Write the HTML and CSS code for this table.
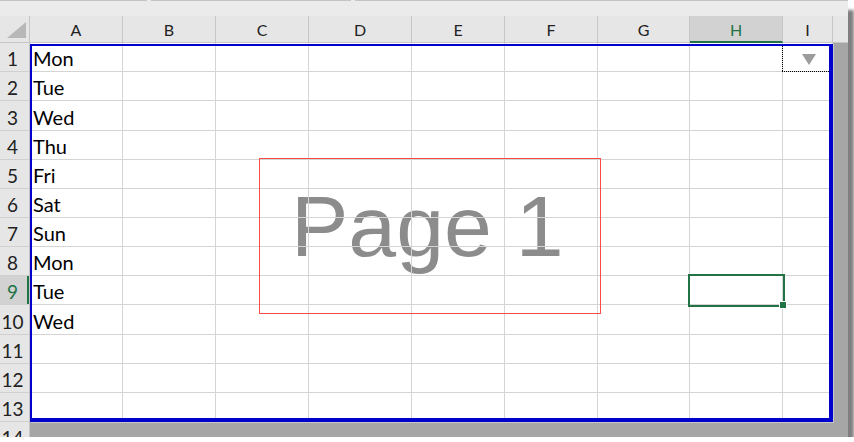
FILE: index.html
```html
<!DOCTYPE html>
<html>
<head>
<meta charset="utf-8">
<link rel="stylesheet" href="styles.css">
</head>
<body>
<div class="window">
  <div class="topbar">
    <span class="seg seg1"></span>
    <span class="seg seg2"></span>
    <span class="seg seg3"></span>
  </div>
  <div class="colheads">
    <div class="corner">
      <svg class="selall" width="19" height="16" viewBox="0 0 19 16"><polygon points="19,0 19,16 0,16" fill="#b8b8b8"/></svg>
    </div>
    <div class="ch w93">A</div>
    <div class="ch w93">B</div>
    <div class="ch w93">C</div>
    <div class="ch w103">D</div>
    <div class="ch w93">E</div>
    <div class="ch w93">F</div>
    <div class="ch w92">G</div>
    <div class="ch w93 sel">H</div>
    <div class="ch w50">I</div>
    <div class="ch rest"></div>
  </div>
  <div class="main">
    <div class="rowheads">
      <div class="rh">1</div>
      <div class="rh">2</div>
      <div class="rh tall">3</div>
      <div class="rh">4</div>
      <div class="rh">5</div>
      <div class="rh">6</div>
      <div class="rh">7</div>
      <div class="rh">8</div>
      <div class="rh sel">9</div>
      <div class="rh tall">10</div>
      <div class="rh">11</div>
      <div class="rh">12</div>
      <div class="rh">13</div>
      <div class="rh last">14</div>
    </div>
    <div class="area">
      <div class="page">
        <div class="wm-text">Page 1</div>
        <div class="cells">
          <div>Mon</div><div></div><div></div><div></div><div></div><div></div><div></div><div></div><div></div>
          <div>Tue</div><div></div><div></div><div></div><div></div><div></div><div></div><div></div><div></div>
          <div>Wed</div><div></div><div></div><div></div><div></div><div></div><div></div><div></div><div></div>
          <div>Thu</div><div></div><div></div><div></div><div></div><div></div><div></div><div></div><div></div>
          <div>Fri</div><div></div><div></div><div></div><div></div><div></div><div></div><div></div><div></div>
          <div>Sat</div><div></div><div></div><div></div><div></div><div></div><div></div><div></div><div></div>
          <div>Sun</div><div></div><div></div><div></div><div></div><div></div><div></div><div></div><div></div>
          <div>Mon</div><div></div><div></div><div></div><div></div><div></div><div></div><div></div><div></div>
          <div>Tue</div><div></div><div></div><div></div><div></div><div></div><div></div><div></div><div></div>
          <div>Wed</div><div></div><div></div><div></div><div></div><div></div><div></div><div></div><div></div>
          <div></div><div></div><div></div><div></div><div></div><div></div><div></div><div></div><div></div>
          <div></div><div></div><div></div><div></div><div></div><div></div><div></div><div></div><div></div>
          <div></div><div></div><div></div><div></div><div></div><div></div><div></div><div></div><div></div>
        </div>
        <div class="wm-box"></div>
        <div class="frame"></div>
        <div class="dots-v"></div>
        <div class="dots-h"></div>
        <svg class="dropdown" width="14" height="12" viewBox="0 0 14 12"><polygon points="0,0 14,0 7,11" fill="#9c9c9c"/></svg>
        <div class="selection"><span class="handle"></span></div>
      </div>
    </div>
  </div>
</div>
</body>
</html>
```

FILE: styles.css
```css
* { box-sizing: border-box; }

html, body {
  margin: 0;
  padding: 0;
  background: #ffffff;
}

.window {
  width: 848px;
  height: 437px;
  overflow: hidden;
  background: #a6a6a6;
  box-shadow: 8px 8px 3px -2px rgba(0, 0, 0, 0.5);
  display: flex;
  flex-direction: column;
  font-family: "Lato", "Open Sans", sans-serif;
}

.topbar {
  height: 16px;
  background: #ebebeb;
  display: flex;
  gap: 4px;
  flex: none;
}

.seg {
  height: 1px;
  background: #c4c4c4;
}
.seg1 { width: 147px; }
.seg2 { width: 200px; }
.seg3 { flex: 1; }

.colheads {
  height: 27px;
  display: flex;
  background: #e6e6e6;
  flex: none;
}

.corner {
  width: 30px;
  border-right: 1px solid #c6c6c6;
  border-bottom: 1px solid #c6c6c6;
  display: flex;
  align-items: flex-end;
  justify-content: flex-end;
  padding: 0 3px 4px 0;
}

.ch {
  border-right: 1px solid #c6c6c6;
  border-bottom: 1px solid #c6c6c6;
  display: flex;
  align-items: center;
  justify-content: center;
  font-size: 16px;
  color: #222;
  padding-top: 1px;
}
.w93 { width: 93px; }
.w92 { width: 92px; }
.w103 { width: 103px; }
.w50 { width: 50px; }
.ch.rest { flex: 1; border-right: none; }

.ch.sel {
  background: #d2d2d2;
  color: #217346;
  border-bottom: 2px solid #217346;
  padding-top: 2px;
}

.main {
  flex: 1;
  display: flex;
  min-height: 0;
}

.rowheads {
  width: 30px;
  flex: none;
  display: flex;
  flex-direction: column;
  background: #e6e6e6;
  border-right: 1px solid #c6c6c6;
}

.rh {
  height: 29px;
  flex: none;
  border-bottom: 1px solid #d0d0d0;
  display: flex;
  align-items: flex-end;
  justify-content: center;
  padding: 0 4px 1px 0;
  font-size: 19px;
  line-height: 23px;
  color: #222;
}
.rh.tall { height: 30px; }
.rh.sel {
  background: #d2d2d2;
  color: #217346;
  box-shadow: inset -2px 0 0 #217346;
}
.rh.last { flex: 1; border-bottom: none; align-items: flex-start; padding-top: 4px; }

.area {
  flex: 1;
  background: #a6a6a6;
}

.page {
  position: relative;
  width: 803px;
  height: 379px;
  background: #ffffff;
  box-shadow: 1px 1px 0 #c8c8c8;
}

.cells {
  position: relative;
  z-index: 1;
  display: grid;
  grid-template-columns: 93px 93px 93px 103px 93px 93px 92px 93px 50px;
  grid-template-rows: 29px 29px 30px 29px 29px 29px 29px 29px 29px 30px 29px 29px 29px;
}

.cells > div {
  border-right: 1px solid #d4d4d4;
  border-bottom: 1px solid #d4d4d4;
  display: flex;
  align-items: flex-end;
  padding: 0 0 1px 3px;
  font-size: 20px;
  line-height: 23px;
  color: #000;
}

.wm-text {
  position: absolute;
  z-index: 0;
  left: 261px;
  top: 140px;
  font-family: "Liberation Sans", Arial, sans-serif;
  font-size: 86px;
  line-height: 86px;
  color: #8c8c8c;
  white-space: nowrap;
}

.wm-box {
  position: absolute;
  z-index: 2;
  left: 229px;
  top: 115px;
  width: 342px;
  height: 156px;
  border: 1px solid #ff4a4a;
}

.frame {
  position: absolute;
  z-index: 3;
  left: 0;
  top: 1px;
  width: 803px;
  height: 378px;
  border-style: solid;
  border-color: #0000cc;
  border-width: 2px 4px 4px 2px;
}

.dots-v {
  position: absolute;
  z-index: 2;
  left: 752px;
  top: 1px;
  width: 1px;
  height: 28px;
  background: repeating-linear-gradient(to bottom, #000 0 1px, transparent 1px 2px);
}

.dots-h {
  position: absolute;
  z-index: 2;
  left: 752px;
  top: 28px;
  width: 47px;
  height: 1px;
  background: repeating-linear-gradient(to right, #000 0 1px, transparent 1px 2px);
}

.dropdown {
  position: absolute;
  z-index: 2;
  left: 772px;
  top: 11px;
}

.selection {
  position: absolute;
  z-index: 4;
  left: 658px;
  top: 231px;
  width: 97px;
  height: 33px;
  border: 2px solid #217346;
}

.handle {
  position: absolute;
  left: 89px;
  top: 25px;
  width: 8px;
  height: 8px;
  background: #217346;
  border: 1px solid #ffffff;
}
```
